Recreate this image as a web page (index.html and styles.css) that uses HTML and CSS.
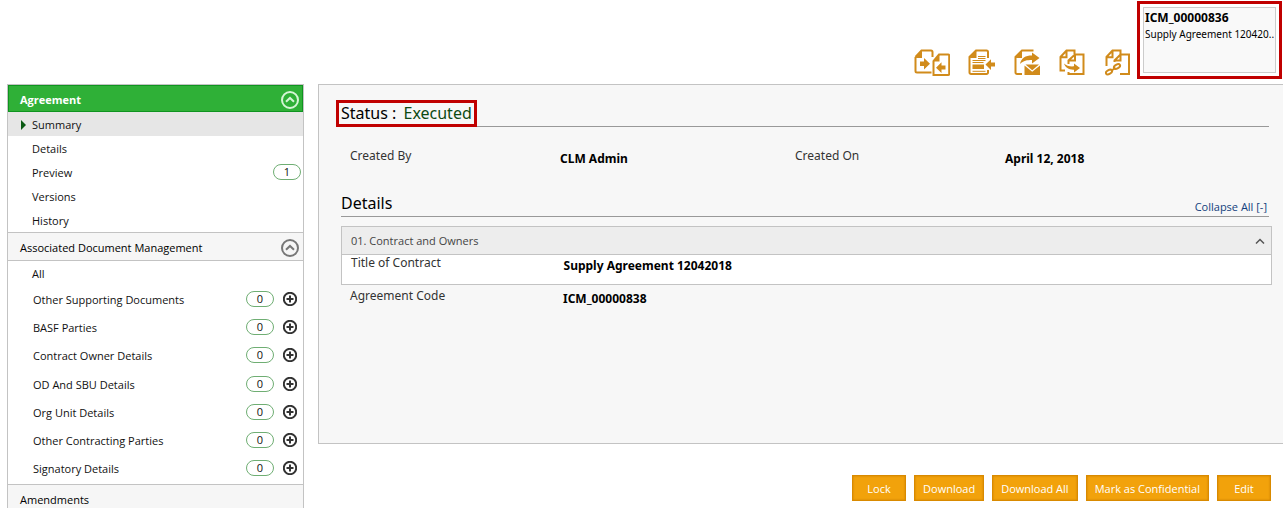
FILE: index.html
```html
<!DOCTYPE html>
<html lang="en">
<head>
<meta charset="UTF-8">
<meta name="viewport" content="width=device-width, initial-scale=1.0">
<title>Agreement - Summary</title>
<link rel="stylesheet" href="styles.css">
</head>
<body>

<!-- Shared icons -->
<svg class="sprite" aria-hidden="true">
<symbol id="chevron" viewBox="0 0 18 18">
<circle cx="9" cy="9" r="8"/>
<path d="M5 10.800l4-3.800 4 3.800"/>
</symbol>
<symbol id="plus" viewBox="0 0 14 14">
<circle cx="7" cy="7" r="6.200"/>
<path d="M7 3.500v7M3.500 7h7"/>
</symbol>
</svg>

<header class="top">
<nav class="tools">
<button type="button" class="tool" aria-label="Compare">
<svg width="36" height="28" viewBox="0 0 36 28">
<path class="line" d="M1.500 8v14a1.500 1.500 0 0 0 1.500 1.500h14.500M1.500 8l6-6.500H17a1.500 1.500 0 0 1 1.500 1.500v5"/>
<path class="fill" d="M1.500 9l6.500-7.500V9zM6 12.500h4V9l6 5.700-6 5.800V17H6z"/>
<path class="line" d="M19.500 12v14h14.700a1 1 0 0 0 1-1V6.500a1 1 0 0 0-1-1H25z"/>
<path class="fill" d="M19.500 12.500l6-7v7zM31.500 16.500h-4v-3.300L22 18.700l5.500 5.300v-3.500h4z"/>
</svg>
</button>
<button type="button" class="tool" aria-label="Import">
<svg width="28" height="28" viewBox="0 0 28 28">
<path class="line" d="M20 9V3a1.500 1.500 0 0 0-1.500-1.500H8L1.500 8v15.500A1.500 1.500 0 0 0 3 25h15.500a1.500 1.500 0 0 0 1.500-1.500V21"/>
<path class="fill" d="M1.500 9l7-7.500V9zM4.500 15.500H16V20H4.500zM27 13.500h-4v-3.300L17.500 15.500 23 21v-3.500h4z"/>
<path class="thin" d="M10 7.500h7.500M10 9.500h7.500M4.500 11.500h13M4.500 13.500h11M4.500 22.300h13"/>
</svg>
</button>
<button type="button" class="tool" aria-label="Send by mail">
<svg width="27" height="28" viewBox="0 0 27 28">
<path class="line" d="M19.500 1.500H8L1.500 8v15.500A1.500 1.500 0 0 0 3 25h5"/>
<path class="fill" d="M1.500 9l6.500-7.500V9zM6 15c1-6 5.500-8.500 12-8.500V3.500l7.500 5.500-7.500 5.500V11c-5 0-8.500.5-12 4z"/>
<path class="fill" d="M11.500 15.500h13.500l-6.800 5.700z"/>
<path class="fill" d="M10.500 16.500l7.700 6.200 7.800-6.200V26H10.500z"/>
</svg>
</button>
<button type="button" class="tool" aria-label="Copy">
<svg width="28" height="28" viewBox="0 0 28 28">
<path class="line" d="M6 21.500H1.500V8l6-6.500h8V5M1.500 8.200h6V1.500"/>
<path class="line" d="M9.500 15v-3.500L16 5.500h8.500V25h-15v-2M10 11.500h6v-6"/>
<path class="fill" d="M5 14.500c2.500 2.300 6 3.200 10 2.800v-2.800l6 4.500-6 4.500v-2.800c-5 .3-8.500-2-10-6.200z"/>
</svg>
</button>
<button type="button" class="tool" aria-label="Link">
<svg width="27" height="28" viewBox="0 0 27 28">
<path class="line" d="M1.500 17V8l6-6.500h8V5M1.500 8.200h6V1.500"/>
<path class="line" d="M9.500 13v-1.500l6-6H24V25h-9M10 11.500h5.500v-6"/>
<ellipse class="line" cx="12" cy="17.500" rx="3.300" ry="2" transform="rotate(-30 12 17.500)"/>
<ellipse class="line" cx="4" cy="23" rx="3.300" ry="2" transform="rotate(-30 4 23)"/>
<path class="line" d="M6 22l4.500-3.200"/>
</svg>
</button>
</nav>
<section class="record">
<div class="record-card">
<strong>ICM_00000836</strong>
<p>Supply Agreement 120420..</p>
</div>
</section>
</header>

<div class="page">

<!-- Left menu -->
<aside class="side">
<h2 class="side-head active">Agreement
<button type="button" class="icon-btn" aria-label="Collapse Agreement"><svg class="chevron"><use href="#chevron"/></svg></button>
</h2>
<ul class="menu">
<li class="selected"><a href="#">Summary</a></li>
<li><a href="#">Details</a></li>
<li><a href="#">Preview</a><span class="count">1</span></li>
<li><a href="#">Versions</a></li>
<li><a href="#">History</a></li>
</ul>
<h2 class="side-head">Associated Document Management
<button type="button" class="icon-btn" aria-label="Collapse Associated Document Management"><svg class="chevron"><use href="#chevron"/></svg></button>
</h2>
<ul class="menu docs">
<li class="all"><a href="#">All</a></li>
<li><a href="#">Other Supporting Documents</a><span class="count">0</span><button type="button" class="icon-btn" aria-label="Add document"><svg class="plus"><use href="#plus"/></svg></button></li>
<li><a href="#">BASF Parties</a><span class="count">0</span><button type="button" class="icon-btn" aria-label="Add party"><svg class="plus"><use href="#plus"/></svg></button></li>
<li><a href="#">Contract Owner Details</a><span class="count">0</span><button type="button" class="icon-btn" aria-label="Add owner"><svg class="plus"><use href="#plus"/></svg></button></li>
<li><a href="#">OD And SBU Details</a><span class="count">0</span><button type="button" class="icon-btn" aria-label="Add OD and SBU"><svg class="plus"><use href="#plus"/></svg></button></li>
<li><a href="#">Org Unit Details</a><span class="count">0</span><button type="button" class="icon-btn" aria-label="Add org unit"><svg class="plus"><use href="#plus"/></svg></button></li>
<li><a href="#">Other Contracting Parties</a><span class="count">0</span><button type="button" class="icon-btn" aria-label="Add contracting party"><svg class="plus"><use href="#plus"/></svg></button></li>
<li><a href="#">Signatory Details</a><span class="count">0</span><button type="button" class="icon-btn" aria-label="Add signatory"><svg class="plus"><use href="#plus"/></svg></button></li>
</ul>
<h2 class="side-head">Amendments</h2>
</aside>

<main class="content">
<div class="summary">
<div class="status-row">
<h1 class="status">Status : <span>Executed</span></h1>
</div>
<dl class="fields">
<dt>Created By</dt><dd>CLM Admin</dd>
<dt>Created On</dt><dd>April 12, 2018</dd>
</dl>
<div class="details-head">
<h1>Details</h1>
<a href="#">Collapse All [-]</a>
</div>
<section class="panel">
<h3 class="panel-head">01. Contract and Owners
<button type="button" class="icon-btn" aria-label="Collapse panel"><svg class="caret" viewBox="0 0 10 6"><path d="M1 5.500l4-4 4 4"/></svg></button>
</h3>
<dl class="fields panel-row">
<dt>Title of Contract</dt><dd>Supply Agreement 12042018</dd>
</dl>
</section>
<dl class="fields code-row">
<dt>Agreement Code</dt><dd>ICM_00000838</dd>
</dl>
</div>

<div class="actions">
<button type="button">Lock</button>
<button type="button">Download</button>
<button type="button">Download All</button>
<button type="button">Mark as Confidential</button>
<button type="button">Edit</button>
</div>
</main>

</div>

</body>
</html>
```
FILE: styles.css
```css
/* General styling */
* {
    box-sizing: border-box;
}

html {
    overflow-y: hidden;
}

body {
    margin: 0;
    background: #fff;
    color: #111;
    font-family: "Noto Sans", "Open Sans", sans-serif;
    font-size: 11px;
    line-height: 16px;
}

h1, h2, h3, p, ul, dl, dd {
    margin: 0;
    padding: 0;
    font-weight: normal;
}

a {
    color: inherit;
    text-decoration: none;
}

button {
    font-family: inherit;
    font-size: 11px;
    cursor: pointer;
}

.side, .actions, .panel-head, .details-head a {
    font-family: "Open Sans", sans-serif;
}

.sprite {
    display: none;
}

.icon-btn, .tool {
    display: flex;
    padding: 0;
    border: none;
    background: none;
}

/* Top bar */
.top {
    display: flex;
    justify-content: flex-end;
    align-items: flex-start;
    gap: 5px;
    height: 84px;
    padding: 1px 1px 0 0;
}

.tools {
    display: flex;
    gap: 18px;
    padding-top: 48px;
}

.line {
    fill: none;
    stroke: #d18b1b;
    stroke-width: 2;
}

.thin {
    fill: none;
    stroke: #d18b1b;
    stroke-width: 1;
}

.fill {
    fill: #d18b1b;
}

.record {
    width: 145px;
    height: 78px;
    padding: 3px;
    border: 3px solid #c00000;
}

.record-card {
    height: 66px;
    padding: 2px 0 0 1px;
    border: 1px solid #ccc;
    background: #f9f9f9;
    color: #000;
    overflow: hidden;
    white-space: nowrap;
}

.record-card strong {
    font-size: 12px;
}

.record-card p {
    font-size: 10px;
}

/* Left menu */
.page {
    display: flex;
    align-items: flex-start;
    gap: 14px;
    padding-left: 7px;
}

.side {
    flex: none;
    width: 297px;
    border: 1px solid #c3c3c3;
}

.side-head {
    display: flex;
    align-items: center;
    justify-content: space-between;
    height: 29px;
    padding: 2px 4px 0 12px;
    border-top: 1px solid #c3c3c3;
    border-bottom: 1px solid #c3c3c3;
    background: #f6f6f6;
    color: #000;
    font-size: 11px;
}

.side-head.active {
    height: 27px;
    border: 1px solid #0f9420;
    padding-left: 11px;
    padding-right: 3px;
    background: #2fb037;
    color: #fff;
    font-weight: bold;
}

.chevron {
    width: 18px;
    height: 18px;
    fill: none;
    stroke: #777;
    stroke-width: 2;
}

.active .chevron {
    stroke: #d5f5d5;
}

.menu {
    list-style: none;
}

.menu li {
    display: flex;
    align-items: center;
    height: 24px;
    padding: 0 2px 0 24px;
}

.menu a {
    flex: 1;
    padding-top: 2px;
}

.menu li.selected {
    position: relative;
    background: #e6e6e6;
}

.menu li.selected::before {
    content: "";
    position: absolute;
    left: 13px;
    top: 8px;
    border: 5px solid transparent;
    border-left-color: #0a5a14;
    border-right: none;
}

.menu.docs {
    display: flex;
    flex-direction: column;
    justify-content: space-between;
    min-height: 223px;
    padding: 2px 0 4px;
}

.menu.docs li {
    height: 24px;
    padding: 0 6px 0 25px;
}

.menu.docs li.all {
    height: 20px;
    padding: 0 0 0 24px;
}

.count {
    width: 28px;
    height: 16px;
    border: 1px solid #6fae73;
    border-radius: 8px;
    background: #fff;
    line-height: 14px;
    text-align: center;
}

.plus {
    width: 14px;
    height: 14px;
    margin-left: 9px;
    fill: none;
    stroke: #333;
    stroke-width: 2;
}

/* Main area */
.content {
    flex: 1;
}

.summary {
    min-height: 360px;
    padding: 15px 11px 0 22px;
    border: 1px solid #c3c3c3;
    border-right: none;
    background: #f7f7f7;
}

.status-row {
    margin: 0 3px 0 0;
    border-bottom: 1px solid #999;
}

.status {
    display: inline-block;
    margin: 0 0 -1px -5px;
    padding: 0 2px;
    border: 3px solid #c00000;
    color: #000;
    font-size: 16px;
    line-height: 21px;
    vertical-align: top;
}

.status span {
    margin-left: 3px;
    color: #0c4a12;
}

.fields {
    display: grid;
    grid-template-columns: 210fr 235fr 210fr 267fr;
    padding: 21px 0 0 9px;
    color: #333;
    font-size: 12px;
}

.fields dd {
    padding-top: 3px;
    color: #000;
    font-weight: bold;
}

.details-head {
    display: flex;
    align-items: flex-end;
    justify-content: space-between;
    margin: 26px 3px 9px 0;
    padding-right: 2px;
    border-bottom: 1px solid #999;
}

.details-head h1 {
    padding-bottom: 2px;
    color: #000;
    font-size: 16px;
    line-height: 21px;
}

.details-head a {
    padding-bottom: 1px;
    color: #123f7d;
    font-size: 11px;
}

.panel {
    border: 1px solid #c3c3c3;
    background: #fff;
}

.panel-head {
    display: flex;
    align-items: center;
    justify-content: space-between;
    height: 28px;
    padding: 0 6px 0 9px;
    border-bottom: 1px solid #c3c3c3;
    background: #ededed;
    color: #444;
    font-size: 11px;
}

.caret {
    width: 10px;
    height: 6px;
    fill: none;
    stroke: #555;
    stroke-width: 1.5;
}

.panel-row, .code-row {
    grid-template-columns: 213fr 709fr;
}

.panel-row {
    min-height: 29px;
    padding-top: 0;
}

.code-row {
    padding-top: 3px;
}

/* Bottom buttons */
.actions {
    display: flex;
    flex-wrap: wrap;
    justify-content: flex-end;
    gap: 8px;
    padding: 31px 12px 0 0;
}

.actions button {
    min-width: 54px;
    height: 26px;
    padding: 0 8px;
    border: 1px solid #d98a00;
    background: #f2a20b;
    box-shadow: inset 0 0 2px #c67c00;
    color: #fff;
}
```
